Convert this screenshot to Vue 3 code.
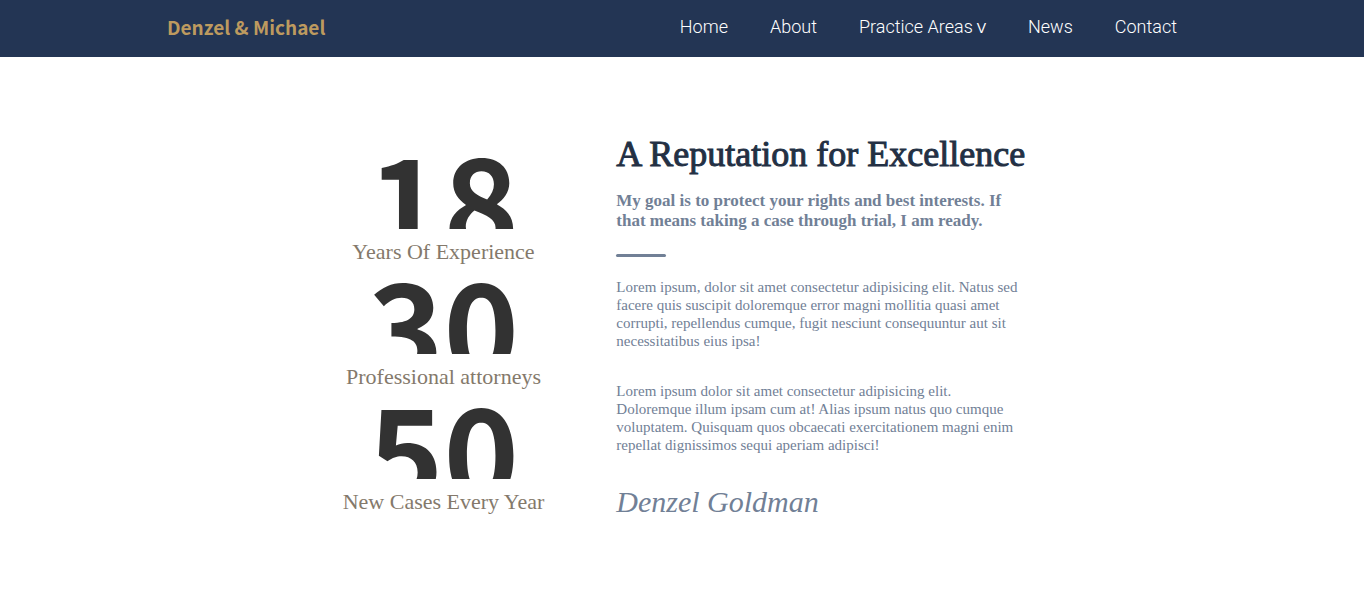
<script setup>
const links = [
  { label: 'Home' },
  { label: 'About' },
  { label: 'Practice Areas', menu: true },
  { label: 'News' },
  { label: 'Contact' },
]
const stats = [
  { value: '18', label: 'Years Of Experience' },
  { value: '30', label: 'Professional attorneys' },
  { value: '50', label: 'New Cases Every Year' },
]
</script>

<template>
  <header class="bar">
    <div class="bar-inner">
      <a class="brand" href="#">Denzel &amp; Michael</a>
      <nav class="nav">
        <a v-for="link in links" :key="link.label" href="#">{{ link.label }}<span v-if="link.menu" class="caret"> V</span></a>
      </nav>
    </div>
  </header>
  <main class="about">
    <section class="stats">
      <div v-for="stat in stats" :key="stat.label" class="stat">
        <div class="value">{{ stat.value }}</div>
        <div class="label">{{ stat.label }}</div>
      </div>
    </section>
    <section class="story">
      <h1>A Reputation for Excellence</h1>
      <p class="lead">My goal is to protect your rights and best interests. If<br>that means taking a case through trial, I am ready.</p>
      <hr>
      <p class="copy">Lorem ipsum, dolor sit amet consectetur adipisicing elit. Natus sed<br>facere quis suscipit doloremque error magni mollitia quasi amet<br>corrupti, repellendus cumque, fugit nesciunt consequuntur aut sit<br>necessitatibus eius ipsa!</p>
      <p class="copy">Lorem ipsum dolor sit amet consectetur adipisicing elit.<br>Doloremque illum ipsam cum at! Alias ipsum natus quo cumque<br>voluptatem. Quisquam quos obcaecati exercitationem magni enim<br>repellat dignissimos sequi aperiam adipisci!</p>
      <p class="signature">Denzel Goldman</p>
    </section>
  </main>
</template>

<style>
body {
  margin: 0;
  background: #fff;
}
</style>

<style scoped>
.bar {
  background: #233554;
}
.bar-inner {
  display: flex;
  align-items: center;
  justify-content: space-between;
  box-sizing: border-box;
  max-width: 1030px;
  min-height: 57px;
  margin: 0 auto;
  padding: 0 20px 3px 0;
}
.brand {
  color: #bd9a5f;
  font: 700 19px/32px "Noto Sans CJK SC", sans-serif;
  text-decoration: none;
  white-space: nowrap;
}
.nav {
  display: flex;
  gap: 42px;
}
.nav a {
  color: #fff;
  font: 300 18px/24px "Roboto Slab", Roboto, sans-serif;
  text-decoration: none;
  white-space: nowrap;
}
.caret {
  font: 400 14px/24px "Liberation Sans", sans-serif;
}
.about {
  display: flex;
  justify-content: center;
  gap: 72px;
  padding: 76px 24px 80px;
  font-family: "Source Serif Pro", "Liberation Serif", serif;
}
.stats {
  display: flex;
  flex: 0 0 200px;
  flex-direction: column;
  gap: 14px;
  padding-top: 20px;
}
.stat {
  text-align: center;
  white-space: nowrap;
}
.value {
  height: 76px;
  overflow: hidden;
  color: #323232;
  font: 700 128px/88px "Noto Sans CJK SC", sans-serif;
}
.label {
  padding-top: 10px;
  color: #84796b;
  font-size: 22px;
  line-height: 25px;
}
.story {
  flex: 0 1 405px;
  min-width: 0;
  color: #718096;
  white-space: nowrap;
}
h1 {
  margin: 0;
  color: #233044;
  font-size: 36px;
  font-weight: 400;
  line-height: 42px;
  -webkit-text-stroke: 1px #233044;
}
.lead {
  margin: 16px 0 0;
  font-size: 17px;
  font-weight: 700;
  line-height: 20px;
}
hr {
  width: 50px;
  height: 3px;
  margin: 23px 0 21px;
  border: 0;
  border-radius: 2px;
  background: #718096;
}
.copy {
  margin: 0 0 32px;
  font-size: 15px;
  line-height: 18px;
}
.signature {
  margin: 0;
  font: italic 30px/32px "Liberation Serif", cursive;
}
</style>
